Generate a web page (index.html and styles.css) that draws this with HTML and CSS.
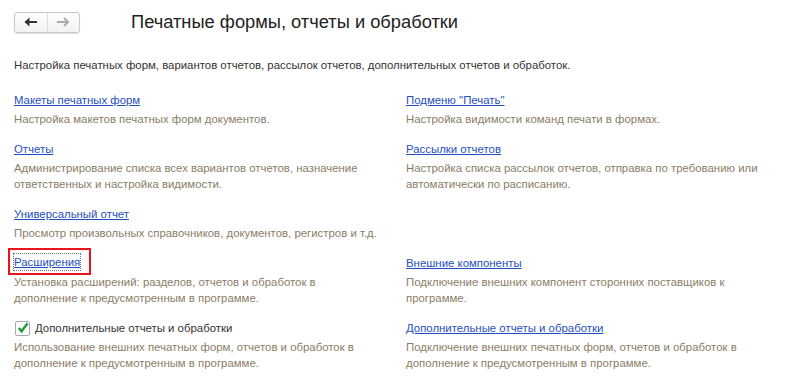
FILE: index.html
```html
<!DOCTYPE html>
<html lang="ru">
<head>
<meta charset="utf-8">
<title>Печатные формы, отчеты и обработки</title>
<link rel="stylesheet" href="styles.css">
</head>
<body>
<div class="page">
  <header class="head">
    <div class="nav">
      <button class="nav-btn"><svg width="14" height="10" viewBox="0 0 14 10"><path d="M1 5 H13" stroke="#333" stroke-width="2"/><path d="M0.5 5 L5.5 0.5 V9.5 Z" fill="#333"/></svg></button>
      <button class="nav-btn"><svg width="14" height="10" viewBox="0 0 14 10"><path d="M1 5 H12" stroke="#aaa" stroke-width="2"/><path d="M8 1 L12 5 L8 9" stroke="#aaa" stroke-width="2" fill="none"/></svg></button>
    </div>
    <h1 class="title">Печатные формы, отчеты и обработки</h1>
  </header>
  <p class="intro">Настройка печатных форм, вариантов отчетов, рассылок отчетов, дополнительных отчетов и обработок.</p>
  <div class="grid">
    <div class="item"><a class="link" href="#">Макеты печатных форм</a><p class="desc">Настройка макетов печатных форм документов.</p></div>
    <div class="item"><a class="link" href="#">Подменю "Печать"</a><p class="desc">Настройка видимости команд печати в формах.</p></div>
    <div class="item"><a class="link" href="#">Отчеты</a><p class="desc">Администрирование списка всех вариантов отчетов, назначение<br>ответственных и настройка видимости.</p></div>
    <div class="item"><a class="link" href="#">Рассылки отчетов</a><p class="desc">Настройка списка рассылок отчетов, отправка по требованию или<br>автоматически по расписанию.</p></div>
    <div class="item"><a class="link" href="#">Универсальный отчет</a><p class="desc">Просмотр произвольных справочников, документов, регистров и т.д.</p></div>
    <div class="item"></div>
    <div class="item"><span class="hl"><a class="link focus" href="#">Расширения</a></span><p class="desc">Установка расширений: разделов, отчетов и обработок в<br>дополнение к предусмотренным в программе.</p></div>
    <div class="item"><a class="link" href="#">Внешние компоненты</a><p class="desc">Подключение внешних компонент сторонних поставщиков к<br>программе.</p></div>
    <div class="item"><label class="check"><span class="box"><svg width="14" height="14" viewBox="0 0 14 14"><path d="M3 7 L6 10.5 L12.5 2" stroke="#1e9a3c" stroke-width="2.6" fill="none"/></svg></span>Дополнительные отчеты и обработки</label><p class="desc">Использование внешних печатных форм, отчетов и обработок в<br>дополнение к предусмотренным в программе.</p></div>
    <div class="item"><a class="link" href="#">Дополнительные отчеты и обработки</a><p class="desc">Подключение внешних печатных форм, отчетов и обработок в<br>дополнение к предусмотренным в программе.</p></div>
  </div>
</div>
</body>
</html>
```
FILE: styles.css
```css
html, body { margin: 0; padding: 0; background: #fff; }
body { font-family: Arial, "Liberation Sans", sans-serif; font-size: 11.4px; color: #333; }
.page { padding: 11px 0 0 14px; }
.head { display: flex; align-items: center; height: 22px; }
.nav { display: flex; width: 66px; height: 21px; border: 1px solid #c8c8c8; border-radius: 3px; box-sizing: border-box; background: linear-gradient(#fff, #f2f2f2); box-shadow: 0 1px 1px rgba(0,0,0,0.12); }
.nav-btn { flex: 1; border: 0; background: transparent; padding: 0; display: flex; align-items: center; justify-content: center; }
.nav-btn + .nav-btn { border-left: 1px solid #ddd; }
.title { margin: 0 0 0 51px; font-size: 18.3px; font-weight: normal; color: #222; line-height: 22px; }
.intro { margin: 24px 0 0; line-height: 16px; color: #333; }
.grid { display: grid; grid-template-columns: 392px 1fr; row-gap: 14px; margin-top: 19px; }
.item { min-height: 0; }
.link { color: #1f4fc0; text-decoration: underline; line-height: 16px; display: inline-block; }
.desc { margin: 3px 0 0; line-height: 16px; color: #8a7d66; }
.hl { display: inline-block; border: 2px solid #e8141c; margin: -7px 0 -4px -6px; padding: 4px 9px 3px 4px; }
.focus { outline: 1px dotted #777; outline-offset: 0; }
.check { display: flex; align-items: center; gap: 5px; line-height: 16px; color: #333; }
.box { width: 13px; height: 13px; border: 1px solid #aaa; border-radius: 2px; background: #fff; display: inline-flex; align-items: center; justify-content: center; margin-left: 1px; }
```
